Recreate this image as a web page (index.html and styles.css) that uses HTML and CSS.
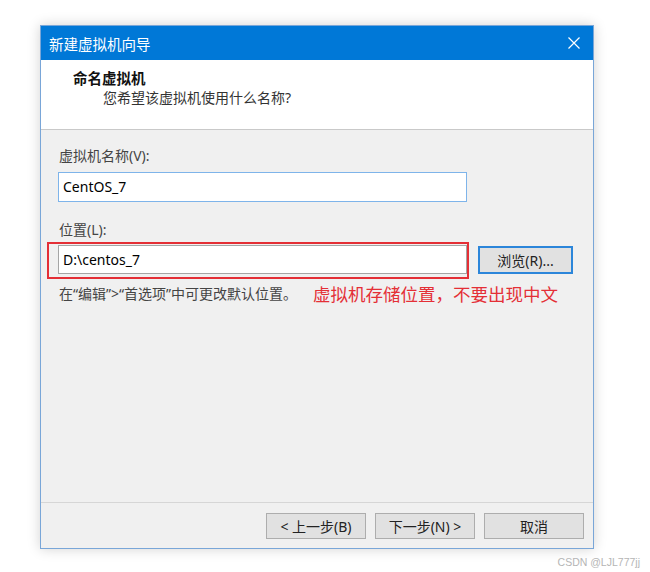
FILE: index.html
```html
<!DOCTYPE html>
<html lang="zh-CN">
<head>
<meta charset="UTF-8">
<title>新建虚拟机向导</title>
<link rel="stylesheet" href="styles.css">
</head>
<body>

<div class="page">

    <div class="dialog">

        <!-- title bar -->
        <div class="titlebar">
            <span class="title">新建虚拟机向导</span>
            <span class="close">
                <svg width="12" height="12" viewBox="0 0 12 12">
                    <path d="M0.5 0.5 L11.5 11.5 M11.5 0.5 L0.5 11.5" stroke="#fff" stroke-width="1.2" fill="none"/>
                </svg>
            </span>
        </div>

        <!-- header -->
        <div class="header">
            <h2>命名虚拟机</h2>
            <p>您希望该虚拟机使用什么名称?</p>
        </div>

        <!-- body -->
        <div class="content">
            <div class="label">虚拟机名称(V):</div>
            <div class="field name-field">CentOS_7</div>

            <div class="label label-gap">位置(L):</div>
            <div class="row">
                <div class="location">
                    <div class="field loc-field">D:\centos_7</div>
                    <div class="mark"></div>
                </div>
                <button class="btn btn-focus">浏览(R)...</button>
            </div>

            <div class="hint-row">
                <span class="hint">在“编辑”&gt;“首选项”中可更改默认位置。</span>
                <span class="note">虚拟机存储位置，不要出现中文</span>
            </div>
        </div>

        <!-- footer -->
        <div class="footer">
            <button class="btn">&lt; 上一步(B)</button>
            <button class="btn">下一步(N) &gt;</button>
            <button class="btn">取消</button>
        </div>

    </div>

    <div class="watermark">CSDN @LJL777jj</div>

</div>

</body>
</html>
```

FILE: styles.css
```css
:root{
    --blue:#0078d7;
    --face:#f0f0f0;
    --btn:#e1e1e1;
    --btn-border:#adadad;
    --text:#333;
    --red:#e42f36;
}

*{
    box-sizing:border-box;
}

body{
    margin:0;
    background:#fff;
    font-family:"Noto Sans", "Noto Sans CJK SC", sans-serif;
    font-size:14px;
    color:var(--text);
}

.page{
    width:600px;
    margin-left:40px;
    padding-top:25px;
}

/* window */
.dialog{
    width:554px;
    border:1px solid #79a6d8;
    background:var(--face);
    box-shadow:0 0 12px rgba(0,0,0,.18);
}

.titlebar{
    height:34px;
    background:var(--blue);
    color:#fff;
    display:flex;
    align-items:center;
    justify-content:space-between;
    padding-left:8px;
}

.title{
    font-family:"Noto Sans CJK SC", sans-serif;
    font-size:14.5px;
}

.close{
    width:36px;
    margin-right:1px;
    display:flex;
    justify-content:center;
}

/* header */
.header{
    height:70px;
    background:#fff;
    border-bottom:1px solid #c9c9c9;
    padding:8px 0 0 32px;
}

.header h2{
    margin:0;
    font-family:"Noto Sans CJK SC", sans-serif;
    font-size:14.5px;
    line-height:20px;
    font-weight:700;
    color:#111;
}

.header p{
    margin:0 0 0 30px;
    font-size:14px;
    line-height:20px;
    color:#333;
}

/* body */
.content{
    height:372px;
    padding:16px 0 0 17px;
}

.label{
    line-height:20px;
    margin-left:1px;
    color:#444;
}

.label-gap{
    margin-top:18px;
}

.field{
    width:409px;
    height:30px;
    background:#fff;
    border:1px solid #7eb4ea;
    padding-left:4px;
    line-height:28px;
    color:#000;
    font-size:14px;
}

.name-field{
    margin-top:6px;
}

.row{
    display:flex;
    align-items:center;
    gap:11px;
    margin-top:5px;
}

.location{
    position:relative;
}

.loc-field{
    height:29px;
    line-height:27px;
    border-color:#a5a5a5;
}

/* red annotation frame drawn over the field */
.mark{
    position:absolute;
    left:-11px;
    top:-3px;
    right:-2px;
    bottom:-5px;
    border:2px solid var(--red);
}

.btn{
    width:100px;
    height:26px;
    padding:0;
    background:var(--btn);
    border:1px solid var(--btn-border);
    font-family:"Noto Sans", "Noto Sans CJK SC", sans-serif;
    font-size:14px;
    color:#222;
}

.btn-focus{
    width:95px;
    height:28px;
    border:2px solid #2c86da;
    margin-top:1px;
}

.hint-row{
    display:flex;
    align-items:center;
    margin-top:9px;
    height:20px;
}

.hint{
    width:254px;
    flex:none;
    white-space:nowrap;
    margin-left:1px;
    color:#444;
}

.note{
    font-family:"Noto Sans CJK SC", sans-serif;
    font-size:17.5px;
    color:var(--red);
    white-space:nowrap;
}

/* footer */
.footer{
    height:46px;
    border-top:1px solid #d6d6d6;
    display:flex;
    justify-content:flex-end;
    gap:9px;
    padding:10px 9px 0 0;
}

.watermark{
    margin-top:7px;
    text-align:right;
    font-family:"Liberation Sans", sans-serif;
    font-size:10.5px;
    line-height:12px;
    color:#b5b5b5;
}
```
